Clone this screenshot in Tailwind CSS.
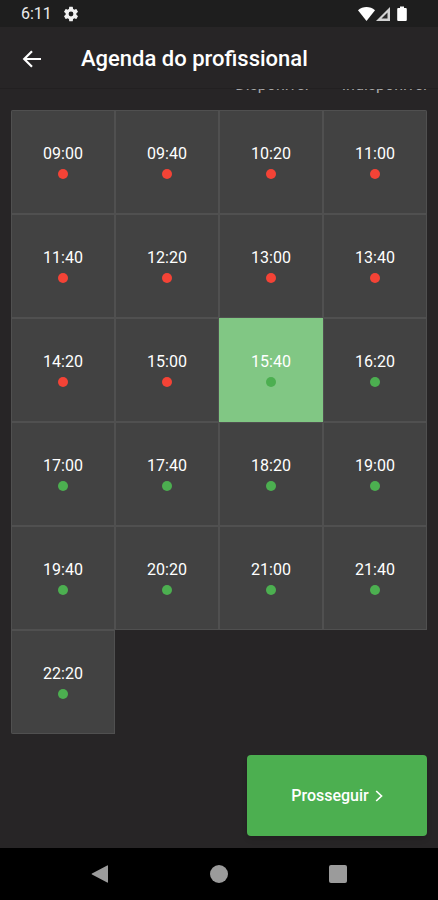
<!DOCTYPE html>
<html lang="pt-BR">
<head>
<meta charset="utf-8">
<meta name="viewport" content="width=device-width, initial-scale=1">
<title>Agenda do profissional</title>
<script src="https://cdn.jsdelivr.net/npm/@tailwindcss/browser@4"></script>
</head>
<body class="flex h-screen flex-col overflow-hidden bg-[#272526] font-[Roboto,sans-serif] text-white">
  <div class="flex h-[27px] shrink-0 items-center bg-[#1e1e1e] pt-px pr-[30px] pl-[21px]">
    <span class="text-base leading-5 text-[#ececec]">6:11</span>
    <svg class="ml-[10px] size-[18px]" viewBox="0 0 24 24" fill="#f2f2f2" aria-hidden="true"><path d="M19.14 12.94c.04-.3.06-.61.06-.94 0-.32-.02-.64-.07-.94l2.03-1.58a.49.49 0 0 0 .12-.61l-1.92-3.32a.49.49 0 0 0-.59-.22l-2.39.96c-.5-.38-1.03-.7-1.62-.94l-.36-2.54a.48.48 0 0 0-.48-.41h-3.84c-.24 0-.43.17-.47.41l-.36 2.54c-.59.24-1.13.57-1.62.94l-2.39-.96a.48.48 0 0 0-.59.22L2.74 8.87c-.12.21-.08.47.12.61l2.03 1.58c-.05.3-.09.63-.09.94s.02.64.07.94l-2.03 1.58a.49.49 0 0 0-.12.61l1.92 3.32c.12.22.37.29.59.22l2.39-.96c.5.38 1.03.7 1.62.94l.36 2.54c.05.24.24.41.48.41h3.84c.24 0 .44-.17.47-.41l.36-2.54c.59-.24 1.13-.56 1.62-.94l2.39.96c.22.08.47 0 .59-.22l1.92-3.32a.48.48 0 0 0-.12-.61l-2.01-1.58zM12 15.2A3.2 3.2 0 1 1 12 8.800a3.200 3.200 0 0 1 0 6.400z"/></svg>
    <svg class="ml-auto h-4 w-[50px]" viewBox="0 0 50 16" aria-hidden="true">
      <path d="M0 4.200C4.800 0 12.200 0 17 4.200L8.500 15z" fill="#fff"/>
      <path d="M32 1V15H18z" fill="#d2d2d2"/>
      <path d="M29.500 6.500V12.600H23.500z" fill="#262626"/>
      <path d="M42 .5h4v1.600h1.500c.8 0 1.300.5 1.300 1.300v10.300c0 .8-.5 1.300-1.300 1.300h-7c-.8 0-1.300-.5-1.300-1.300V3.400c0-.8.5-1.300 1.300-1.300H42z" fill="#fff"/>
    </svg>
  </div>

  <header class="flex h-[61px] shrink-0 items-center pt-0.5 pl-5">
    <button type="button" aria-label="Voltar" class="size-6">
      <svg class="size-6" viewBox="0 0 24 24" fill="none" stroke="#fff" stroke-width="2.200" aria-hidden="true"><path d="M21 12H4.500M12 4.200L4.200 12l7.800 7.800"/></svg>
    </button>
    <h1 class="ml-[37px] text-[22px] leading-7 font-medium">Agenda do profissional</h1>
  </header>

  <main class="min-h-0 flex-1 overflow-hidden border-t border-[#222021] px-[11px]">
    <div class="-mt-[14px] flex justify-end gap-[33px] text-base leading-5 text-[#a8a8a8]">
      <span>Disponível</span>
      <span>Indisponível</span>
    </div>
    <div id="slots" class="mt-[15px] grid grid-cols-4 overflow-hidden rounded-xs"></div>
  </main>

  <footer class="flex shrink-0 justify-end px-[11px] pb-3">
    <button type="button" class="flex h-[81px] w-[180px] items-center justify-center gap-1.5 rounded bg-[#4caf50] text-base leading-5 font-medium shadow-md">
      Prosseguir
      <svg class="h-3 w-2" viewBox="0 0 8 12" fill="none" stroke="#fff" stroke-width="1.700" aria-hidden="true"><path d="M1.200 1L6.500 6l-5.300 5"/></svg>
    </button>
  </footer>

  <nav aria-label="Sistema" class="flex h-[52px] shrink-0 items-center justify-center gap-[101px] bg-black">
    <button type="button" aria-label="Voltar" class="size-[18px]"><svg class="size-[18px]" viewBox="0 0 18 18" fill="#9b9b9b" aria-hidden="true"><path d="M16.200 0.500Q17 0 17 1V17Q17 18 16.200 17.500L1 9.600Q0 9 1 8.400z"/></svg></button>
    <button type="button" aria-label="Início" class="size-[18px] rounded-full bg-[#9b9b9b]"></button>
    <button type="button" aria-label="Recentes" class="size-[18px] rounded-xs bg-[#9b9b9b]"></button>
  </nav>

  <script>
    const times = ["09:00","09:40","10:20","11:00","11:40","12:20","13:00","13:40","14:20","15:00","15:40","16:20","17:00","17:40","18:20","19:00","19:40","20:20","21:00","21:40","22:20"];
    const grid = document.getElementById("slots");
    const base = "flex aspect-square flex-col items-center justify-center gap-[5px] border pb-0.5 text-base leading-5 ";
    const idle = base + "border-[#505050] bg-[#424242]";
    const chosen = base + "border-[#81c784] bg-[#81c784]";
    const select = (slot) => {
      for (const b of grid.children) {
        b.className = b === slot ? chosen : idle;
        b.setAttribute("aria-pressed", b === slot);
      }
    };
    times.forEach((time) => {
      const free = time >= "15:40";
      const slot = document.createElement("button");
      slot.type = "button";
      slot.disabled = !free;
      slot.innerHTML = "<span>" + time + "</span><span class=\"" + (free ? "size-[10px] rounded-full bg-[#4caf50]" : "size-[10px] rounded-full bg-[#f44336]") + "\"></span>";
      slot.addEventListener("click", () => select(slot));
      grid.append(slot);
    });
    select(grid.children[times.indexOf("15:40")]);
  </script>
</body>
</html>
